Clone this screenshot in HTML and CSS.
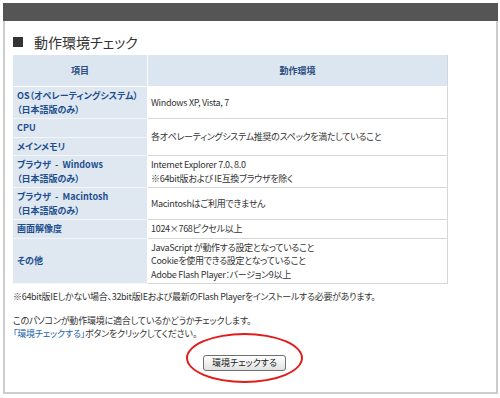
FILE: index.html
```html
<!DOCTYPE html>
<html lang="ja">
<head>
    <meta charset="UTF-8">
    <title>動作環境チェック</title>
    <link rel="stylesheet" href="styles.css">
</head>
<body>
    <div class="frame">
        <div class="topbar"></div>
        <div class="content">
            <h2 class="title"><span class="square"></span>動作環境チェック</h2>

            <table class="spec">
                <tr>
                    <th class="col-item">項目</th>
                    <th class="col-env">動作環境</th>
                </tr>
                <tr>
                    <td class="label">OS（オペレーティングシステム）<br>（日本語版のみ）</td>
                    <td>Windows XP, Vista, 7</td>
                </tr>
                <tr>
                    <td class="label">CPU</td>
                    <td rowspan="2">各オペレーティングシステム推奨のスペックを満たしていること</td>
                </tr>
                <tr>
                    <td class="label">メインメモリ</td>
                </tr>
                <tr>
                    <td class="label">ブラウザ &nbsp;- &nbsp;Windows<br>（日本語版のみ）</td>
                    <td>Internet Explorer 7.0、8.0<br>※64bit版および IE互換ブラウザを除く</td>
                </tr>
                <tr>
                    <td class="label">ブラウザ &nbsp;- &nbsp;Macintosh<br>（日本語版のみ）</td>
                    <td>Macintoshはご利用できません</td>
                </tr>
                <tr>
                    <td class="label">画面解像度</td>
                    <td>1024×768ピクセル以上</td>
                </tr>
                <tr>
                    <td class="label">その他</td>
                    <td>JavaScript が動作する設定となっていること<br>Cookieを使用できる設定となっていること<br>Adobe Flash Player：バージョン9以上</td>
                </tr>
            </table>

            <p class="note">※64bit版IEしかない場合、32bit版IEおよび最新のFlash Playerをインストールする必要があります。</p>

            <p class="lead">このパソコンが動作環境に適合しているかどうかチェックします。<br><span class="link">「環境チェックする」</span>ボタンをクリックしてください。</p>

            <div class="check">
                <span class="check-wrap">
                    <button class="check-btn">環境チェックする</button>
                    <span class="ring"></span>
                </span>
            </div>
        </div>
    </div>
</body>
</html>
```

FILE: styles.css
```css
body {
    margin: 0;
    font-family: "Noto Sans CJK JP", sans-serif;
    font-feature-settings: "palt";
    color: #333333;
    background-color: #ffffff;
}
.frame {
    box-sizing: border-box;
    height: 391px;
    margin: 3px 2px 0 3px;
    border: 2px solid #cdcdcd;
    border-top: none;
}
.topbar {
    height: 18px;
    margin: 0 -2px;
    background-color: #555555;
}
.content {
    padding: 12px 20px 0 8px;
}
.title {
    display: flex;
    align-items: center;
    gap: 11px;
    margin: 0 0 4px;
    font-size: 14px;
    font-weight: normal;
    line-height: 18px;
    color: #333333;
}
.square {
    width: 10px;
    height: 10px;
    background-color: #333333;
}

/* spec table */
.spec {
    width: 435px;
    border-collapse: separate;
    border-spacing: 0;
    font-size: 9px;
    line-height: 13.5px;
}
.spec th {
    height: 31px;
    padding: 0;
    background-color: #dce6f1;
    color: #2c4e7e;
    font-weight: bold;
    border-right: 1px solid #ffffff;
    border-bottom: 1px solid #ffffff;
}
.spec .col-item {
    width: 134px;
}
.spec .col-env {
    border-right: 1px solid #d6d6d6;
}
.spec td {
    padding: 2px 3px;
    letter-spacing: -0.3px;
    border-bottom: 1px solid #d6d6d6;
    border-right: 1px solid #d6d6d6;
    vertical-align: middle;
}
.spec td.label {
    padding-left: 4px;
    letter-spacing: 0;
    background-color: #dfe7f1;
    color: #1d4f8e;
    font-weight: bold;
    border-right: 1px solid #ffffff;
    border-bottom: 1px solid #f2f5f9;
}

.note {
    margin: 6px 0 0;
    font-size: 9px;
    line-height: 13px;
    letter-spacing: -0.3px;
}
.lead {
    margin: 12px 0 0;
    font-size: 9px;
    line-height: 12.5px;
    letter-spacing: -0.2px;
}
.link {
    color: #2162a8;
}

.check {
    margin-top: 7px;
    text-align: center;
}
.check-wrap {
    position: relative;
    display: inline-block;
}
.check-btn {
    padding: 1px 8px;
    font-family: "Noto Sans CJK JP", sans-serif;
    font-feature-settings: "palt";
    font-size: 9px;
    line-height: 12px;
    color: #222222;
    background: linear-gradient(#ffffff, #e2e2e2);
    border: 1px solid #6f6f6f;
    border-radius: 3px;
}
.ring {
    position: absolute;
    left: -17px;
    right: -17px;
    top: -14px;
    bottom: -12px;
    border: 2px solid #e21b1b;
    border-radius: 50%;
}
```
